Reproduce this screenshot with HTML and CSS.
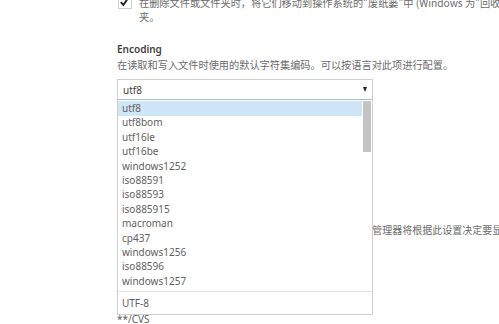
FILE: index.html
```html
<!DOCTYPE html>
<html lang="zh-CN">
<head>
<meta charset="utf-8">
<link rel="stylesheet" href="styles.css">
</head>
<body>
<div class="page">
  <div class="check-row">
    <span class="checkbox">
      <svg width="14" height="14" viewBox="0 0 14 14"><path d="M3 7.2 L5.8 10.2 L11 2.6" fill="none" stroke="#1e1e1e" stroke-width="2"/></svg>
    </span>
    <div class="check-text">
      <div class="line">在删除文件或文件夹时，将它们移动到操作系统的"废纸篓"中 (Windows 为"回收站")，而不是永久删除文件或文件</div>
      <div class="line">夹。</div>
    </div>
  </div>

  <div class="setting">
    <div class="title">Encoding</div>
    <div class="desc">在读取和写入文件时使用的默认字符集编码。可以按语言对此项进行配置。</div>
    <div class="select-wrap">
      <div class="select"><span>utf8</span><span class="arrow"></span></div>
      <div class="dropdown">
        <div class="list">
          <div class="item selected">utf8</div>
          <div class="item">utf8bom</div>
          <div class="item">utf16le</div>
          <div class="item">utf16be</div>
          <div class="item">windows1252</div>
          <div class="item">iso88591</div>
          <div class="item">iso88593</div>
          <div class="item">iso885915</div>
          <div class="item">macroman</div>
          <div class="item">cp437</div>
          <div class="item">windows1256</div>
          <div class="item">iso88596</div>
          <div class="item">windows1257</div>
          <div class="scrollbar"><div class="thumb"></div></div>
        </div>
        <div class="footer">UTF-8</div>
      </div>
    </div>
  </div>

  <div class="setting exclude">
    <div class="title">Exclude</div>
    <div class="desc">配置用于排除文件和文件夹的 glob 模式。例如，文件资源管理器将根据此设置决定要显示或隐藏的文件和文件夹。</div>
    <div class="patterns">
      <div class="pattern">**/.git</div>
      <div class="pattern">**/.svn</div>
      <div class="pattern">**/.hg</div>
      <div class="pattern">**/CVS</div>
    </div>
  </div>
</div>
</body>
</html>
```
FILE: styles.css
```css
html, body {
  margin: 0;
  padding: 0;
  background: #ffffff;
  overflow: hidden;
}
body {
  width: 499px;
  height: 324px;
  font-family: "Noto Sans", "Noto Sans CJK SC", sans-serif;
  font-size: 10px;
  color: #616161;
}
.page {
  padding-left: 117px;
}
.check-row {
  display: flex;
  align-items: flex-start;
  gap: 7px;
  margin-top: -5px;
}
.checkbox {
  flex: none;
  width: 14px;
  height: 14px;
  margin-left: 1px;
  border: 1px solid #cecece;
  box-sizing: border-box;
  background: #fff;
  display: flex;
}
.checkbox svg {
  margin: -1px 0 0 -1px;
}
.check-text {
  min-width: 0;
  color: #6b6b6b;
  font-family: "Noto Sans CJK SC", sans-serif;
  font-size: 10.2px;
}
.check-text .line {
  white-space: nowrap;
  line-height: 14px;
  height: 14px;
}
.check-text .line:first-child {
  margin-top: 1px;
}
.setting {
  margin-top: 18px;
}
.title {
  font-weight: 600;
  color: #3f3f3f;
  font-size: 10px;
  line-height: 15px;
}
.desc {
  color: #6b6b6b;
  font-family: "Noto Sans CJK SC", sans-serif;
  font-size: 10.2px;
  line-height: 15px;
  white-space: nowrap;
}
.select-wrap {
  position: relative;
  width: 256px;
  margin-top: 7px;
}
.select {
  height: 21px;
  box-sizing: border-box;
  border: 1px solid #cfcfcf;
  border-bottom-color: #a9bed1;
  display: flex;
  align-items: center;
  justify-content: space-between;
  padding: 0 5px 0 5px;
  color: #3f3f3f;
}
.arrow {
  width: 0;
  height: 0;
  border-left: 2.5px solid transparent;
  border-right: 2.5px solid transparent;
  border-top: 5px solid #222;
}
.dropdown {
  position: absolute;
  left: 0;
  top: 21px;
  width: 256px;
  box-sizing: border-box;
  border: 1px solid #cfcfcf;
  border-top: none;
  background: #fff;
  z-index: 2;
}
.list {
  position: relative;
  padding-top: 1px;
}
.item {
  height: 14.4px;
  line-height: 14.4px;
  padding-left: 4px;
  margin-right: 10px;
  white-space: nowrap;
}
.item.selected {
  background: #cfe6f7;
  height: 15.4px;
  line-height: 15.4px;
  margin-bottom: -1px;
}
.scrollbar {
  position: absolute;
  right: 1px;
  top: 1px;
  bottom: 0;
  width: 8px;
}
.thumb {
  height: 51px;
  background: #c4c4c4;
}
.footer {
  border-top: 1px solid #e3e3e3;
  margin-top: 3px;
  height: 22px;
  line-height: 22px;
  padding-left: 4px;
  color: #5e5e5e;
}
.exclude {
  margin-top: 107px;
}
.exclude .desc {
  font-size: 10px;
}
.patterns {
  margin-top: 5px;
}
.pattern {
  height: 22px;
  line-height: 22px;
}
```
